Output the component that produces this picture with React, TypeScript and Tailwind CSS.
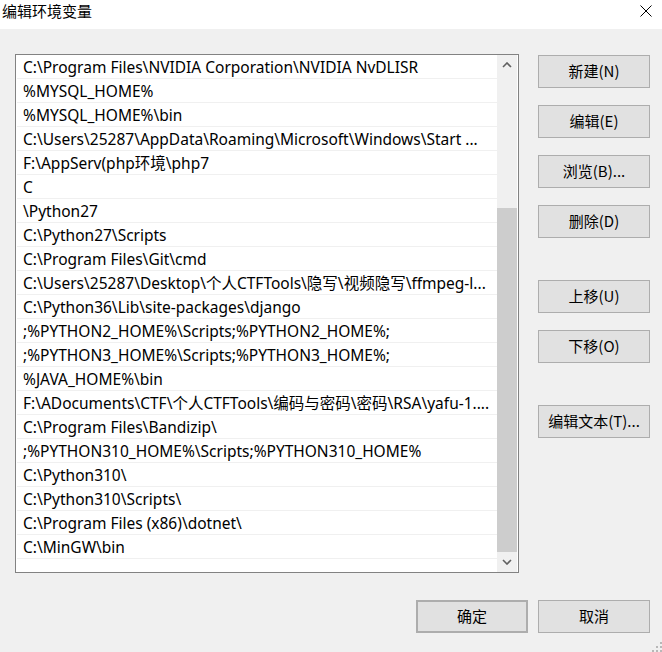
import React from "react";

const rows = [
  "C:\\Program Files\\NVIDIA Corporation\\NVIDIA NvDLISR",
  "%MYSQL_HOME%",
  "%MYSQL_HOME%\\bin",
  "C:\\Users\\25287\\AppData\\Roaming\\Microsoft\\Windows\\Start ...",
  "F:\\AppServ(php环境\\php7",
  "C",
  "\\Python27",
  "C:\\Python27\\Scripts",
  "C:\\Program Files\\Git\\cmd",
  "C:\\Users\\25287\\Desktop\\个人CTFTools\\隐写\\视频隐写\\ffmpeg-l...",
  "C:\\Python36\\Lib\\site-packages\\django",
  ";%PYTHON2_HOME%\\Scripts;%PYTHON2_HOME%;",
  ";%PYTHON3_HOME%\\Scripts;%PYTHON3_HOME%;",
  "%JAVA_HOME%\\bin",
  "F:\\ADocuments\\CTF\\个人CTFTools\\编码与密码\\密码\\RSA\\yafu-1....",
  "C:\\Program Files\\Bandizip\\",
  ";%PYTHON310_HOME%\\Scripts;%PYTHON310_HOME%",
  "C:\\Python310\\",
  "C:\\Python310\\Scripts\\",
  "C:\\Program Files (x86)\\dotnet\\",
  "C:\\MinGW\\bin",
];

function Btn({ label, className = "" }: { label: string; className?: string }) {
  return (
    <div
      className={
        "w-[112px] h-[33px] flex items-center justify-center bg-[#e1e1e1] border border-[#adadad] text-[15px] text-black leading-none pb-[2px] " +
        className
      }
    >
      {label}
    </div>
  );
}

export default function App() {
  return (
    <div
      className="w-[662px] h-[652px] bg-[#f0f0f0] flex flex-col relative overflow-hidden text-black"
      style={{ fontFamily: '"Noto Sans", "Noto Sans CJK SC", sans-serif' }}
    >
      {/* title bar */}
      <div className="h-[29px] bg-white flex items-center justify-between pl-[2px] pr-[10px]">
        <span className="text-[15px] leading-none -mt-[8px]" style={{ fontFamily: '"Noto Sans CJK SC", sans-serif' }}>
          编辑环境变量
        </span>
        <svg width="12" height="12" viewBox="0 0 12 12" className="-mt-[7px]">
          <path d="M0.5 0.5 L11.5 11.5 M11.5 0.5 L0.5 11.5" stroke="#000" strokeWidth="1" fill="none" />
        </svg>
      </div>

      {/* body */}
      <div className="flex pt-[25px] pl-[15px]">
        <div className="w-[504px] h-[519px] border border-[#828282] bg-white flex">
          <div className="flex-1 flex flex-col pl-[1px] overflow-hidden">
            {rows.map((r, i) => (
              <div
                key={i}
                className="h-[24px] shrink-0 border-b border-[#f0f0f0] flex items-center pl-[6px] pt-[2px] text-[15.5px] whitespace-nowrap overflow-hidden leading-none"
              >
                {r}
              </div>
            ))}
          </div>
          <div className="w-[20px] mr-[1px] bg-[#f0f0f0] flex flex-col">
            <div className="h-[20px] flex items-center justify-center">
              <svg width="10" height="6" viewBox="0 0 10 6">
                <path d="M1 5 L5 1 L9 5" stroke="#606060" strokeWidth="1.6" fill="none" />
              </svg>
            </div>
            <div className="flex-1" />
            <div className="h-[344px] bg-[#cdcdcd]" />
            <div className="h-[20px] flex items-center justify-center">
              <svg width="10" height="6" viewBox="0 0 10 6">
                <path d="M1 1 L5 5 L9 1" stroke="#606060" strokeWidth="1.6" fill="none" />
              </svg>
            </div>
          </div>
        </div>

        <div className="ml-[19px] pt-[1px] flex flex-col" style={{ fontFamily: '"Noto Sans CJK SC", sans-serif' }}>
          <Btn label="新建(N)" />
          <Btn label="编辑(E)" className="mt-[17px]" />
          <Btn label="浏览(B)..." className="mt-[17px]" />
          <Btn label="删除(D)" className="mt-[17px]" />
          <Btn label="上移(U)" className="mt-[42px]" />
          <Btn label="下移(O)" className="mt-[17px]" />
          <Btn label="编辑文本(T)..." className="mt-[42px]" />
        </div>
      </div>

      {/* bottom buttons */}
      <div className="flex justify-end gap-[10px] pr-[12px] mt-[27px]" style={{ fontFamily: '"Noto Sans CJK SC", sans-serif' }}>
        <Btn label="确定" className="border-2 border-[#0078d7]" />
        <Btn label="取消" />
      </div>

      {/* size grip */}
      <svg width="10" height="10" viewBox="0 0 10 10" className="absolute right-0 bottom-0">
        <rect x="8" y="0" width="2" height="2" fill="#b8b8b8" />
        <rect x="4" y="4" width="2" height="2" fill="#b8b8b8" />
        <rect x="8" y="4" width="2" height="2" fill="#b8b8b8" />
        <rect x="0" y="8" width="2" height="2" fill="#b8b8b8" />
        <rect x="4" y="8" width="2" height="2" fill="#b8b8b8" />
        <rect x="8" y="8" width="2" height="2" fill="#b8b8b8" />
      </svg>
    </div>
  );
}
